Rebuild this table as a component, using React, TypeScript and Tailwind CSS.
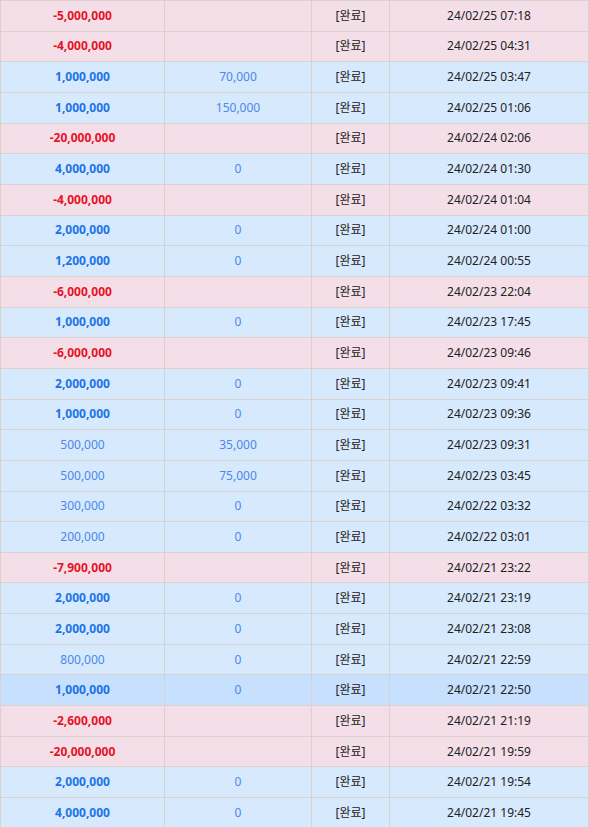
type Row = {
  amount: string;
  bonus: string;
  date: string;
  active?: boolean;
};

const rows: Row[] = [
  { amount: "-5,000,000", bonus: "", date: "24/02/25 07:18" },
  { amount: "-4,000,000", bonus: "", date: "24/02/25 04:31" },
  { amount: "1,000,000", bonus: "70,000", date: "24/02/25 03:47" },
  { amount: "1,000,000", bonus: "150,000", date: "24/02/25 01:06" },
  { amount: "-20,000,000", bonus: "", date: "24/02/24 02:06" },
  { amount: "4,000,000", bonus: "0", date: "24/02/24 01:30" },
  { amount: "-4,000,000", bonus: "", date: "24/02/24 01:04" },
  { amount: "2,000,000", bonus: "0", date: "24/02/24 01:00" },
  { amount: "1,200,000", bonus: "0", date: "24/02/24 00:55" },
  { amount: "-6,000,000", bonus: "", date: "24/02/23 22:04" },
  { amount: "1,000,000", bonus: "0", date: "24/02/23 17:45" },
  { amount: "-6,000,000", bonus: "", date: "24/02/23 09:46" },
  { amount: "2,000,000", bonus: "0", date: "24/02/23 09:41" },
  { amount: "1,000,000", bonus: "0", date: "24/02/23 09:36" },
  { amount: "500,000", bonus: "35,000", date: "24/02/23 09:31" },
  { amount: "500,000", bonus: "75,000", date: "24/02/23 03:45" },
  { amount: "300,000", bonus: "0", date: "24/02/22 03:32" },
  { amount: "200,000", bonus: "0", date: "24/02/22 03:01" },
  { amount: "-7,900,000", bonus: "", date: "24/02/21 23:22" },
  { amount: "2,000,000", bonus: "0", date: "24/02/21 23:19" },
  { amount: "2,000,000", bonus: "0", date: "24/02/21 23:08" },
  { amount: "800,000", bonus: "0", date: "24/02/21 22:59" },
  { amount: "1,000,000", bonus: "0", date: "24/02/21 22:50", active: true },
  { amount: "-2,600,000", bonus: "", date: "24/02/21 21:19" },
  { amount: "-20,000,000", bonus: "", date: "24/02/21 19:59" },
  { amount: "2,000,000", bonus: "0", date: "24/02/21 19:54" },
  { amount: "4,000,000", bonus: "0", date: "24/02/21 19:45" },
];

function amountClass(amount: string) {
  if (amount.startsWith("-")) return "font-bold text-[#e8111f]";
  const value = Number(amount.replace(/,/g, ""));
  if (value >= 1000000) return "font-bold text-[#1a73e6]";
  return "text-[#4a88ea]";
}

export default function App() {
  return (
    <div className="w-[589px] h-[827px] overflow-hidden bg-white font-['Noto_Sans','Noto_Sans_CJK_KR',sans-serif] text-[12px]">
      <div className="border-l border-t border-[#dad3cd]">
        {rows.map((row, i) => {
          const minus = row.amount.startsWith("-");
          const bg = row.active ? "bg-[#c6e0fd]" : minus ? "bg-[#f4dfe8]" : "bg-[#d7e9fd]";
          return (
            <div
              key={i}
              className={`grid grid-cols-[164px_147px_78px_199px] h-[30.67px] border-b border-[#dad3cd] ${bg}`}
            >
              <div className={`flex items-center justify-center border-r border-[#dad3cd] ${amountClass(row.amount)}`}>
                {row.amount}
              </div>
              <div className="flex items-center justify-center border-r border-[#dad3cd] text-[#4a88ea]">
                {row.bonus}
              </div>
              <div className="flex items-center justify-center border-r border-[#dad3cd] text-[#222]">
                [완료]
              </div>
              <div className="flex items-center justify-center border-r border-[#dad3cd] text-[#222]">
                {row.date}
              </div>
            </div>
          );
        })}
      </div>
    </div>
  );
}
